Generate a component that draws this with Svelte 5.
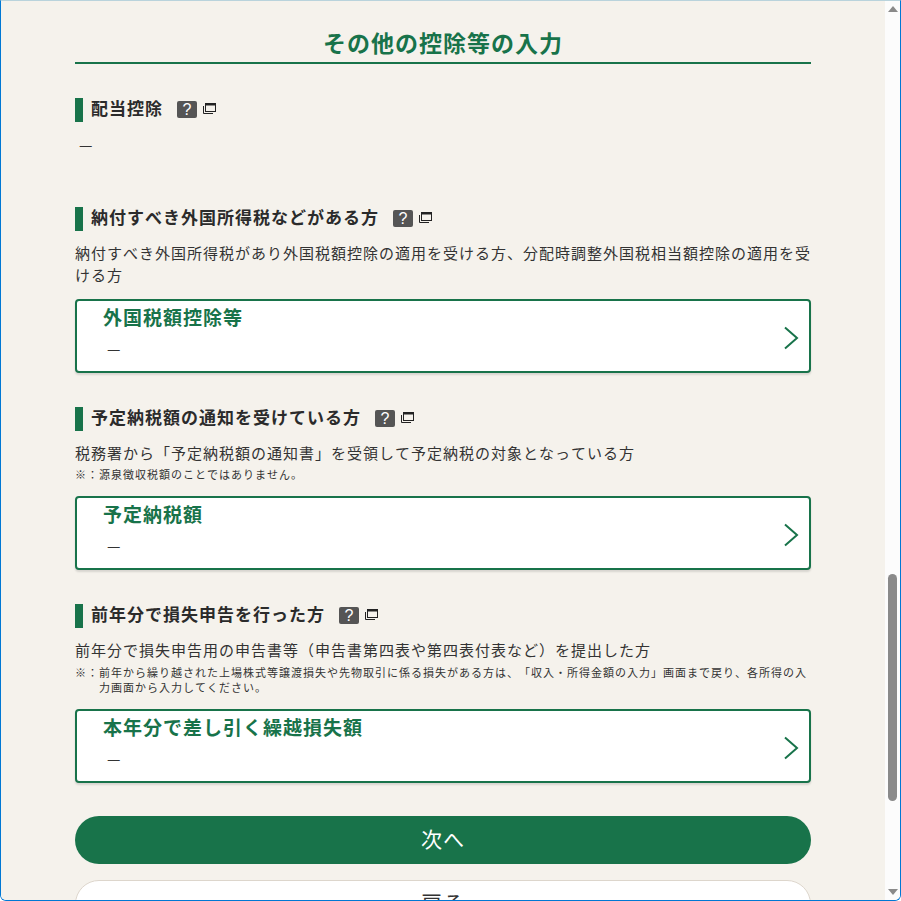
<script>
    const sections = [
        {
            title: "納付すべき外国所得税などがある方",
            lead: "納付すべき外国所得税があり外国税額控除の適用を受ける方、分配時調整外国税相当額控除の適用を受ける方",
            note: "",
            card: "外国税額控除等"
        },
        {
            title: "予定納税額の通知を受けている方",
            lead: "税務署から「予定納税額の通知書」を受領して予定納税の対象となっている方",
            note: "源泉徴収税額のことではありません。",
            card: "予定納税額"
        },
        {
            title: "前年分で損失申告を行った方",
            lead: "前年分で損失申告用の申告書等（申告書第四表や第四表付表など）を提出した方",
            note: "前年から繰り越された上場株式等譲渡損失や先物取引に係る損失がある方は、「収入・所得金額の入力」画面まで戻り、各所得の入力画面から入力してください。",
            card: "本年分で差し引く繰越損失額"
        }
    ];
</script>

{#snippet heading(text)}
    <h3 class="heading">
        <span class="heading-text">{text}</span>
        <span class="help">?</span>
        <svg class="popup" width="13" height="11" viewBox="0 0 13 11" fill="none" stroke="#222">
            <rect x="2.5" y="0.5" width="10" height="8" />
            <rect x="2.5" y="0.5" width="10" height="1.5" fill="#222" />
            <path d="M0.5 3v7.5h9.5" />
        </svg>
    </h3>
{/snippet}

<div class="shell">
    <main class="page">
        <h2 class="page-title">その他の控除等の入力</h2>

        <section class="first">
            {@render heading("配当控除")}
            <p class="dash">—</p>
        </section>

        {#each sections as s}
            <section class="block">
                {@render heading(s.title)}
                <p class="lead">{s.lead}</p>
                {#if s.note}
                    <p class="note"><span>※：</span><span>{s.note}</span></p>
                {/if}
                <button class="card">
                    <span class="card-title">{s.card}</span>
                    <span class="card-value">—</span>
                    <svg class="chevron" width="16" height="24" viewBox="0 0 16 24" fill="none" stroke="#18734a" stroke-width="2">
                        <path d="M2 1.5 L14 12 L2 22.5" />
                    </svg>
                </button>
            </section>
        {/each}

        <button class="next">次へ</button>
        <button class="back">戻る</button>
    </main>

    <div class="scrollbar">
        <span class="arrow up"></span>
        <div class="track"><div class="thumb"></div></div>
        <span class="arrow down"></span>
    </div>
</div>

<style>
    :global(body) {
        margin: 0;
        background: #fff;
    }

    .shell {
        box-sizing: border-box;
        width: 901px;
        height: 901px;
        display: flex;
        overflow: hidden;
        border: 1px solid #0078d4;
        border-top-color: #b9d3dc;
        border-radius: 0 0 6px 6px;
        font-family: "Noto Sans CJK JP", "Noto Sans", sans-serif;
        font-kerning: none;
        color: #333;
        letter-spacing: 1px;
        text-spacing-trim: space-all;
    }

    .page {
        flex: 1;
        min-width: 0;
        height: 1000px;
        background: #f5f2ec;
        padding: 0 74px;
    }

    .page-title {
        box-sizing: border-box;
        height: 63px;
        margin: 0;
        padding-top: 25px;
        border-bottom: 2px solid #18734a;
        color: #18734a;
        font-size: 23px;
        line-height: 32px;
        font-weight: 700;
        text-align: center;
    }

    .first {
        height: 143px;
        padding-top: 34px;
        box-sizing: border-box;
    }

    .heading {
        display: flex;
        align-items: center;
        height: 24px;
        margin: 0;
        padding-left: 8px;
        border-left: 8px solid #18734a;
        font-size: 17px;
        line-height: 24px;
        font-weight: 700;
        color: #2b2b2b;
    }

    .heading-text {
        margin-top: -5px;
    }

    .help {
        width: 20px;
        height: 17px;
        margin-left: 14px;
        margin-top: -2px;
        background: #555;
        border-radius: 2px;
        color: #fff;
        font-family: "Liberation Sans", sans-serif;
        font-size: 16px;
        line-height: 17px;
        font-weight: 400;
        text-align: center;
        letter-spacing: 0;
    }

    .popup {
        margin: -3px 0 0 6px;
    }

    .dash {
        margin: 12px 0 0 4px;
        font-size: 15px;
        line-height: 22px;
    }

    .block {
        margin-bottom: 34px;
    }

    .block:last-of-type {
        margin-bottom: 33px;
    }

    .lead {
        margin: 11px 0 0;
        font-size: 15px;
        line-height: 22px;
    }

    .note {
        display: flex;
        margin: 3px 0 14px;
        font-size: 11px;
        line-height: 15px;
    }

    .block:last-of-type .note {
        margin-top: 4px;
    }

    .note span:first-child {
        flex: none;
        width: 24px;
    }

    .card {
        position: relative;
        display: block;
        box-sizing: border-box;
        width: 100%;
        height: 74px;
        margin-top: 13px;
        padding: 0 26px 8px;
        background: #fff;
        border: 2px solid #18734a;
        border-radius: 4px;
        box-shadow: 0 2px 2px rgba(0, 0, 0, 0.12);
        font: inherit;
        letter-spacing: inherit;
        text-align: left;
        color: #333;
    }

    .card-title {
        display: block;
        color: #18734a;
        font-size: 19px;
        line-height: 26px;
        font-weight: 700;
    }

    .card-value {
        display: block;
        margin: 8px 0 0 4px;
        font-size: 15px;
        line-height: 22px;
    }

    .chevron {
        position: absolute;
        right: 10px;
        top: 25px;
    }

    .next,
    .back {
        display: block;
        box-sizing: border-box;
        width: 100%;
        height: 48px;
        padding: 0 0 5px;
        border-radius: 24px;
        font: inherit;
        font-size: 21px;
        letter-spacing: inherit;
        text-align: center;
    }

    .next {
        background: #18734a;
        border: none;
        color: #fff;
    }

    .back {
        margin-top: 16px;
        background: #fff;
        border: 1px solid #ddd6cc;
        color: #333;
    }

    .scrollbar {
        flex: none;
        width: 15px;
        height: 100%;
        display: flex;
        flex-direction: column;
        align-items: center;
        background: #fcfcfc;
    }

    .track {
        flex: 1;
        width: 100%;
        padding-top: 557px;
        box-sizing: border-box;
    }

    .thumb {
        width: 9px;
        height: 227px;
        margin: 0 auto;
        background: #8a8a8a;
        border-radius: 5px;
    }

    .arrow {
        flex: none;
        width: 0;
        height: 0;
        margin: 5px 0;
        border-left: 5px solid transparent;
        border-right: 5px solid transparent;
    }

    .arrow.up {
        border-bottom: 6px solid #8a8a8a;
    }

    .arrow.down {
        border-top: 6px solid #8a8a8a;
    }
</style>
